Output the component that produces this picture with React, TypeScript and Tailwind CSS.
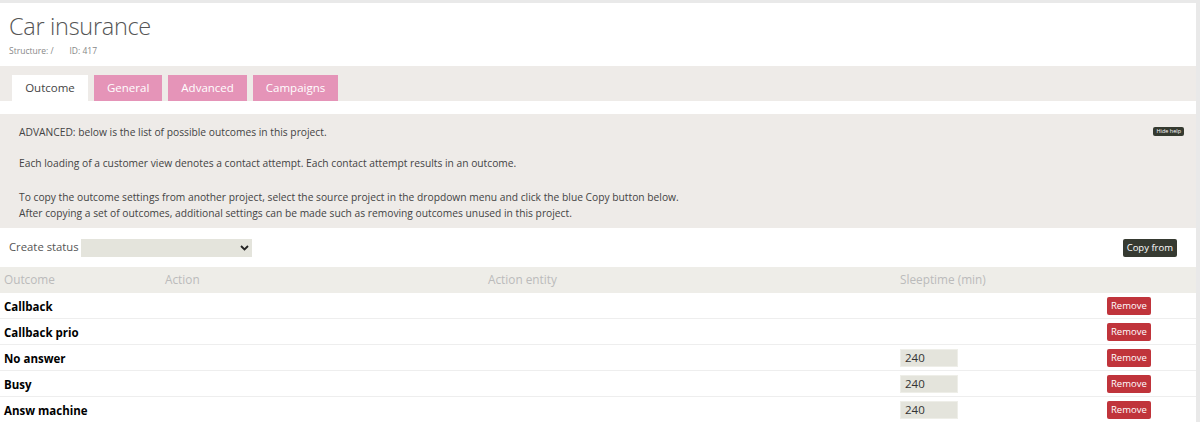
import React from 'react';

const rows = [
  { name: 'Callback', sleep: '' },
  { name: 'Callback prio', sleep: '' },
  { name: 'No answer', sleep: '240' },
  { name: 'Busy', sleep: '240' },
  { name: 'Answ machine', sleep: '240' },
];

const tabs = ['General', 'Advanced', 'Campaigns'];

const cols = 'grid grid-cols-[165px_323px_412px_207px_1fr]';

export default function App() {
  return (
    <div className="h-[422px] overflow-hidden bg-[#e9e9e9] pt-[3px] pr-[4px] font-['Open_Sans',sans-serif] text-[#444]">
      <div className="h-full bg-white">
        {/* Header */}
        <div className="px-[9px] pt-[8px] h-[63px]">
          <h1 className="text-[23.5px] leading-[30px] font-light text-[#555] tracking-[-0.3px]">Car insurance</h1>
          <div className="mt-[4px] flex gap-[16px] text-[8.5px] text-[#888]">
            <span>Structure: /</span>
            <span>ID: 417</span>
          </div>
        </div>

        {/* Tabs */}
        <div className="h-[35px] bg-[#eeebe8] flex items-end gap-[6px] pl-[12px]">
          <div className="h-[26px] w-[76px] bg-white flex items-center justify-center text-[11.5px] text-[#444]">Outcome</div>
          {tabs.map((t) => (
            <div
              key={t}
              className="h-[26px] px-[13px] bg-[#e594b8] flex items-center justify-center text-[11.5px] text-white"
            >
              {t}
            </div>
          ))}
        </div>

        {/* Help */}
        <div className="mt-[13px] h-[114px] bg-[#eeebe8] px-[19px] pt-[10px] text-[10.25px] leading-[16px] text-[#444] relative">
          <p>ADVANCED: below is the list of possible outcomes in this project.</p>
          <p className="mt-[15px]">Each loading of a customer view denotes a contact attempt. Each contact attempt results in an outcome.</p>
          <p className="mt-[18px]">To copy the outcome settings from another project, select the source project in the dropdown menu and click the blue Copy button below.</p>
          <p>After copying a set of outcomes, additional settings can be made such as removing outcomes unused in this project.</p>
          <button className="absolute right-[12px] top-[13px] h-[9px] px-[3px] rounded-[2px] bg-[#353a30] text-white text-[5.5px] leading-[9px]">
            Hide help
          </button>
        </div>

        {/* Create status */}
        <div className="h-[39px] flex items-center pl-[9px] pr-[19px]">
          <span className="text-[11.3px] text-[#555]">Create status</span>
          <div className="ml-[2px] h-[18px] w-[171px] bg-[#e4e4dc] flex items-center justify-end pr-[3px]">
            <svg width="9" height="6" viewBox="0 0 9 6">
              <path d="M1 1l3.5 3.5L8 1" fill="none" stroke="#222" strokeWidth="1.8" />
            </svg>
          </div>
          <button className="ml-auto h-[18px] px-[4px] rounded-[2px] bg-[#363a31] text-white text-[9.5px] leading-[18px]">
            Copy from
          </button>
        </div>

        {/* Table */}
        <div className={`${cols} h-[26px] items-center bg-[#eeede8] text-[11.8px] text-[#bbb]`}>
          <span className="pl-[4px]">Outcome</span>
          <span>Action</span>
          <span>Action entity</span>
          <span>Sleeptime (min)</span>
          <span />
        </div>
        {rows.map((r) => (
          <div key={r.name} className={`${cols} h-[26px] items-center border-b border-[#eeeeee]`}>
            <span className="pl-[4px] text-[11.5px] font-bold text-black leading-[14px] pt-[2px]">{r.name}</span>
            <span />
            <span />
            <span>
              {r.sleep && (
                <span className="block h-[18px] w-[58px] bg-[#e4e4dc] border border-[#eeeee8] pl-[4px] text-[11.5px] leading-[16px] text-[#333]">
                  {r.sleep}
                </span>
              )}
            </span>
            <span>
              <button className="block h-[18px] px-[4px] rounded-[2px] bg-[#c0343b] text-white text-[9.5px] leading-[18px]">
                Remove
              </button>
            </span>
          </div>
        ))}
      </div>
    </div>
  );
}
